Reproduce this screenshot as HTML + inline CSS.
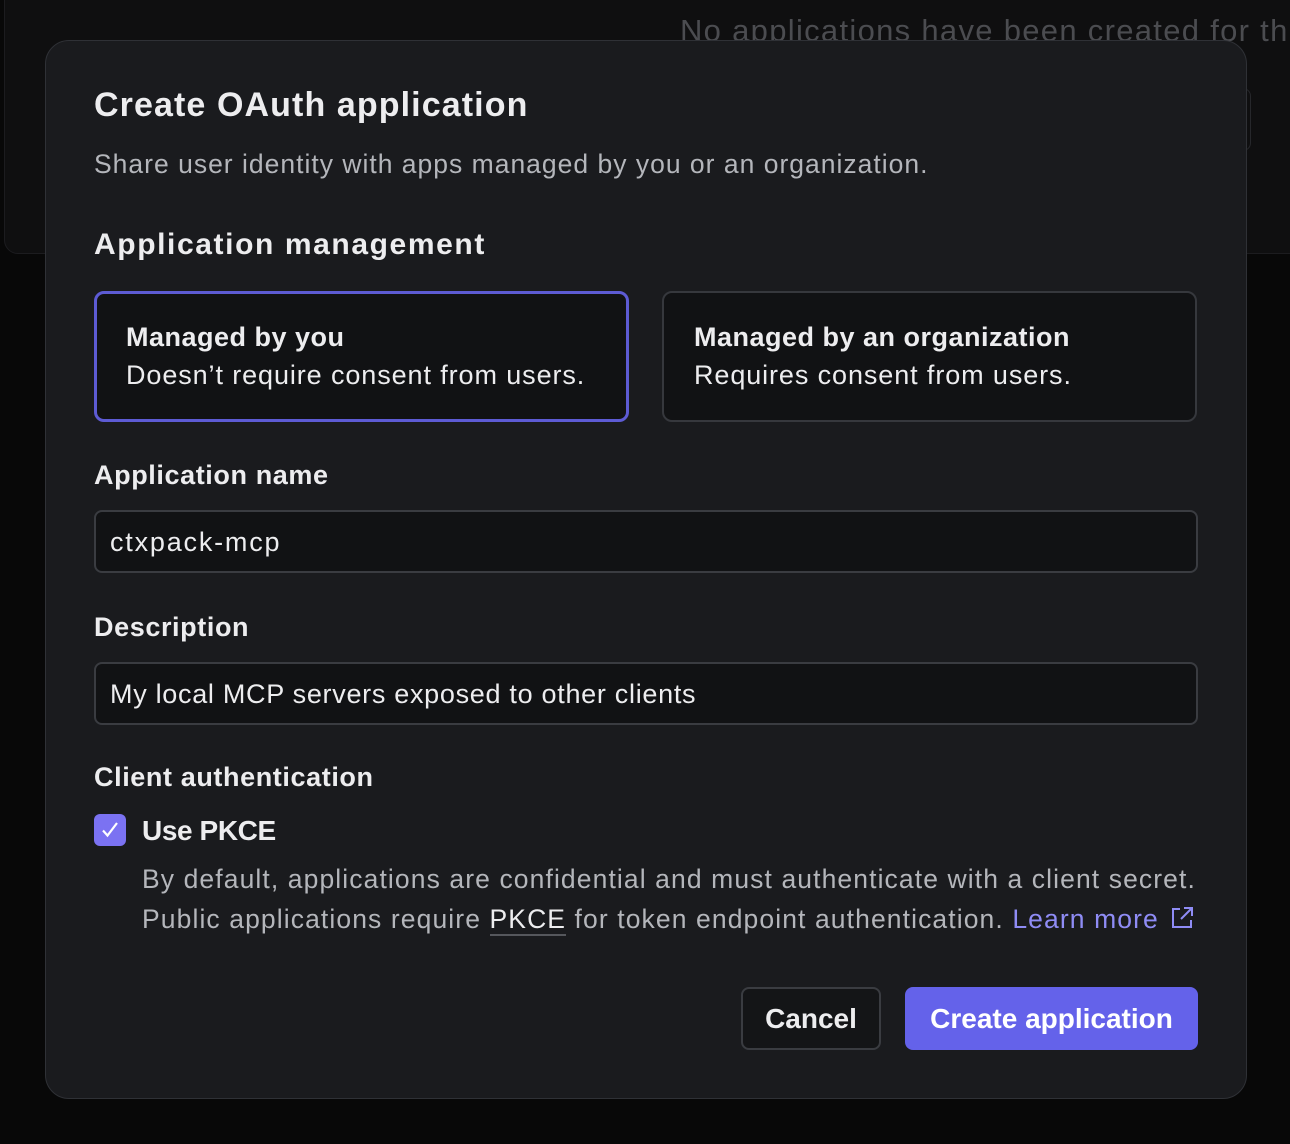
<!DOCTYPE html>
<html><head><meta charset="utf-8"><style>
*{margin:0;padding:0;box-sizing:border-box}
body{width:1290px;height:1144px;background:#080808;font-family:"Liberation Sans",sans-serif;position:relative;overflow:hidden;color:#ededef}
.a{position:absolute;white-space:nowrap}
.bgcard{position:absolute;left:4px;top:-20px;width:1300px;height:274px;background:#0f0f10;border:1px solid #1c1c1f;border-radius:14px}
.bgbtn{position:absolute;left:1180px;top:88px;width:71px;height:63px;border:1px solid #26272b;border-radius:8px}
.modal{position:absolute;left:45px;top:40px;width:1202px;height:1059px;background:#1a1b1e;border:1px solid #2f3136;border-radius:24px}
.card{position:absolute;top:291px;width:535px;height:131px;background:#111214;border:2px solid #36383d;border-radius:10px}
.card.sel{border:3px solid #5d5bd4}
.inp{position:absolute;left:94px;width:1104px;height:63px;background:#111214;border:2px solid #3a3c41;border-radius:8px}
.lbl{font-weight:bold;font-size:27px;color:#ededef;letter-spacing:0.6px}
.t{font-size:26px;color:#b4b6bb}
</style></head><body>
<div class="bgcard"></div>
<div class="a" style="left:680px;top:13px;font-size:31px;color:#4b4c50;letter-spacing:1.3px">No applications have been created for th</div>
<div class="bgbtn"></div>
<div class="modal"></div>
<div class="a" style="left:94px;top:86px;font-size:34px;font-weight:bold;letter-spacing:1.1px">Create OAuth application</div>
<div class="a t" style="left:94px;top:149px;font-size:26.5px;letter-spacing:1px">Share user identity with apps managed by you or an organization.</div>
<div class="a lbl" style="left:94px;top:228px;font-size:30px;letter-spacing:1.6px">Application management</div>
<div class="card sel" style="left:94px"></div>
<div class="card" style="left:662px"></div>
<div class="a" style="left:126px;top:322px;font-size:27px;font-weight:bold;letter-spacing:0.5px">Managed by you</div>
<div class="a" style="left:126px;top:360px;font-size:27px;color:#ededef;letter-spacing:0.9px">Doesn’t require consent from users.</div>
<div class="a" style="left:694px;top:322px;font-size:27px;font-weight:bold;letter-spacing:0.5px">Managed by an organization</div>
<div class="a" style="left:694px;top:360px;font-size:27px;color:#ededef;letter-spacing:0.9px">Requires consent from users.</div>
<div class="a lbl" style="left:94px;top:460px">Application name</div>
<div class="inp" style="top:510px"></div>
<div class="a" style="left:110px;top:527px;font-size:27px;letter-spacing:1.8px">ctxpack-mcp</div>
<div class="a lbl" style="left:94px;top:612px">Description</div>
<div class="inp" style="top:662px"></div>
<div class="a" style="left:110px;top:679px;font-size:27px;letter-spacing:0.7px">My local MCP servers exposed to other clients</div>
<div class="a lbl" style="left:94px;top:762px">Client authentication</div>
<div class="a" style="left:94px;top:814px;width:32px;height:32px;background:#7b72f2;border-radius:6px"><svg width="32" height="32" viewBox="0 0 32 32"><path d="M9 16.5l4.5 5L23 9" fill="none" stroke="#fff" stroke-width="2.2"/></svg></div>
<div class="a" style="left:142px;top:815px;font-size:28px;font-weight:bold;letter-spacing:-0.4px">Use PKCE</div>
<div class="a t" style="left:142px;top:864px;font-size:26.5px;letter-spacing:1.1px">By default, applications are confidential and must authenticate with a client secret.</div>
<div class="a t" style="left:142px;top:904px;font-size:26.5px;letter-spacing:1.1px">Public applications require <span style="color:#ededef;border-bottom:2px solid #55575c">PKCE</span> for token endpoint authentication. <span style="color:#8f8cf5">Learn more</span></div>
<svg class="a" style="left:1170px;top:906px" width="24" height="24" viewBox="0 0 24 24" fill="none" stroke="#8f8cf5" stroke-width="2"><path d="M10 3H3v18h18v-7M14 2h8v8M22 2L11 13"/></svg>
<div class="a" style="left:741px;top:987px;width:140px;height:63px;border:2px solid #3a3c41;border-radius:8px;background:#141517;font-size:28px;font-weight:bold;text-align:center;line-height:59px">Cancel</div>
<div class="a" style="left:905px;top:987px;width:293px;height:63px;background:#6462ea;border-radius:8px;font-size:28px;font-weight:bold;text-align:center;line-height:63px;color:#fff">Create application</div>
</body></html>
